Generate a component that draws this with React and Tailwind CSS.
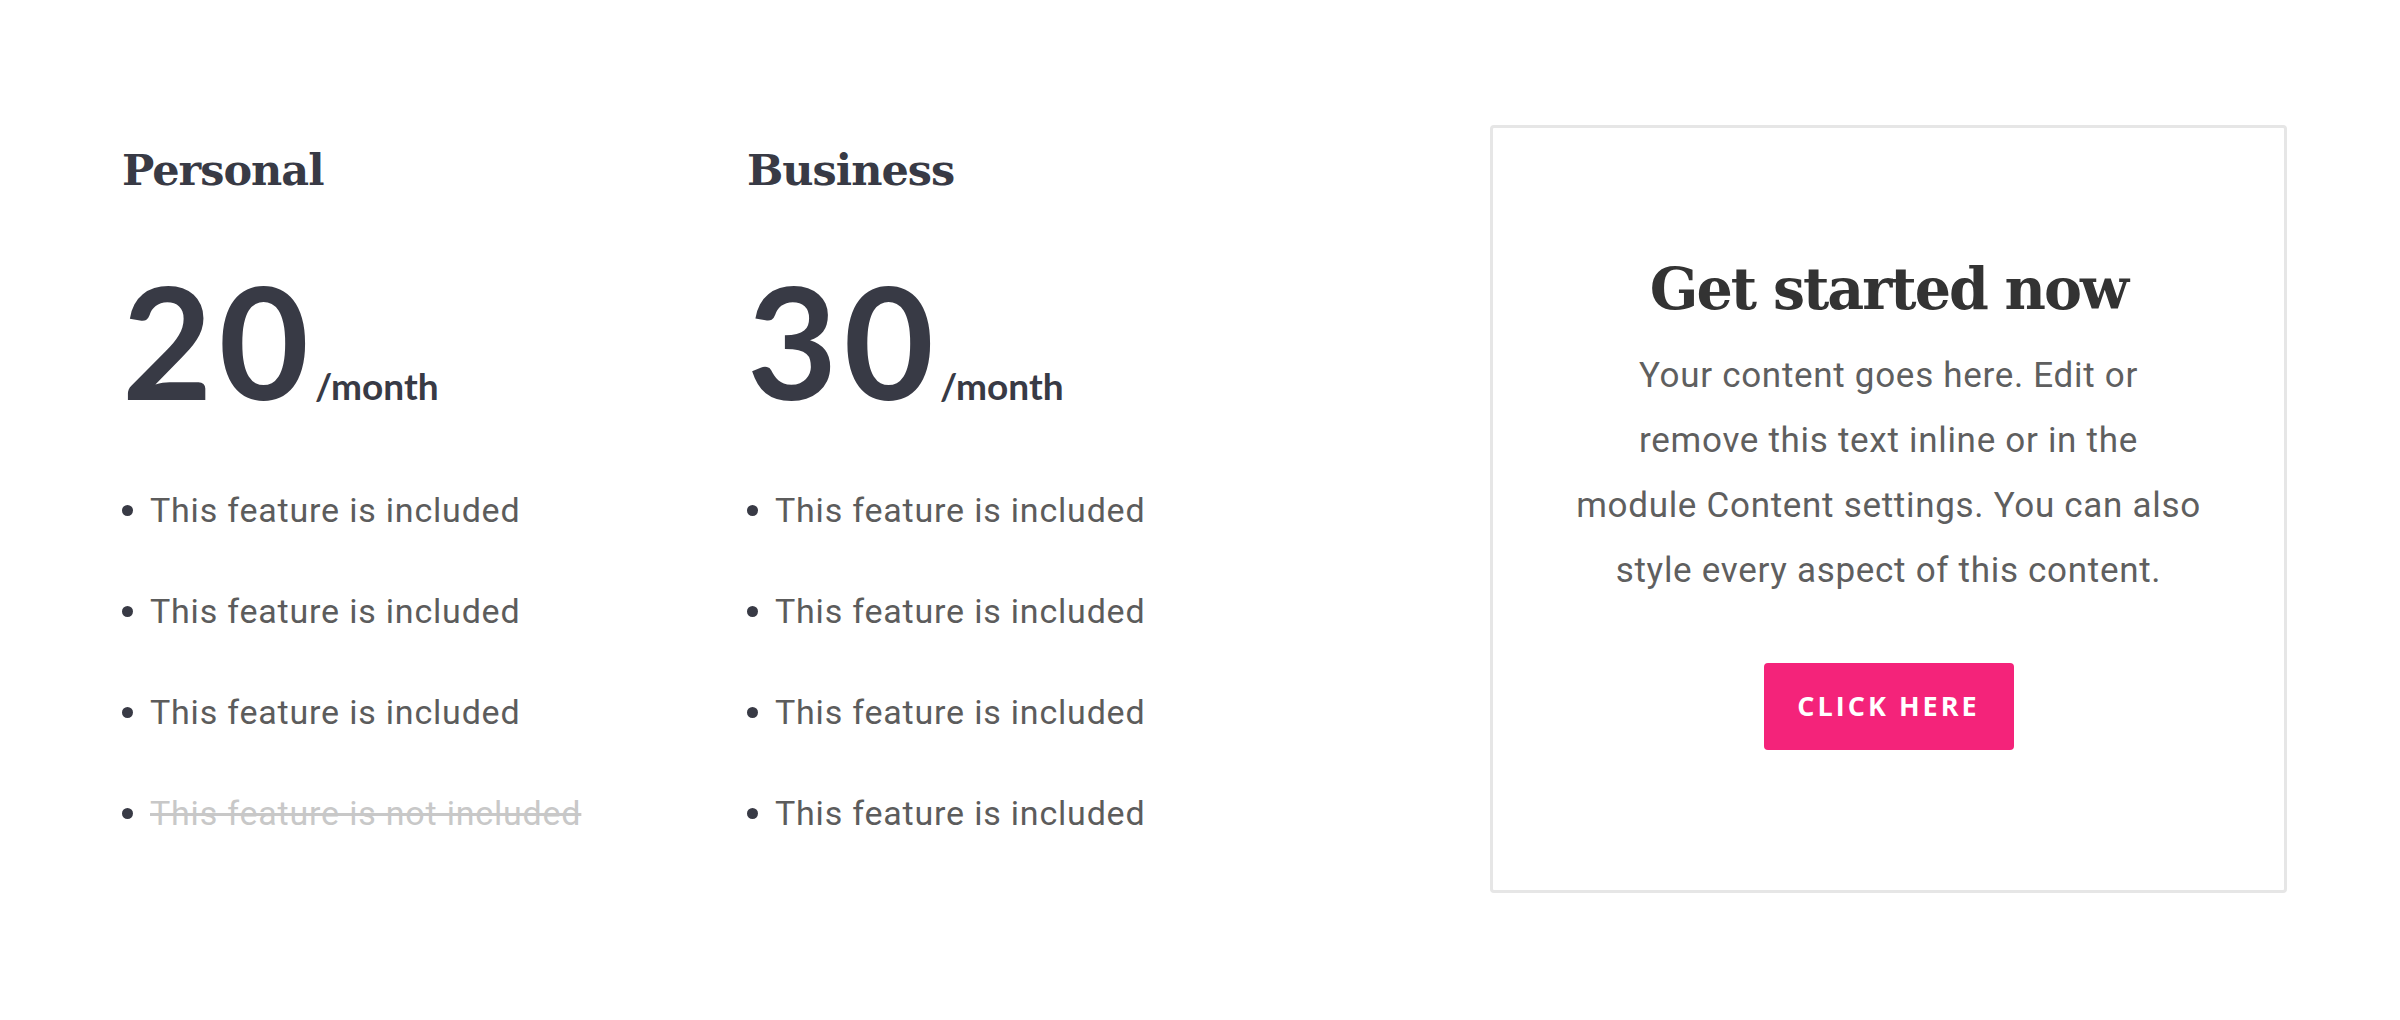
const plans = [
  {
    name: 'Personal',
    price: '20',
    features: [
      { text: 'This feature is included', on: true },
      { text: 'This feature is included', on: true },
      { text: 'This feature is included', on: true },
      { text: 'This feature is not included', on: false },
    ],
  },
  {
    name: 'Business',
    price: '30',
    features: [
      { text: 'This feature is included', on: true },
      { text: 'This feature is included', on: true },
      { text: 'This feature is included', on: true },
      { text: 'This feature is included', on: true },
    ],
  },
]

const slab = "font-['DejaVu_Serif',serif]"
const sans = "font-['Roboto','Liberation_Sans',sans-serif]"
const num = "font-['Lato','Liberation_Sans',sans-serif]"

function PlanColumn({ plan }) {
  return (
    <div className="w-[625px] shrink-0 pt-[140px]">
      <h2 className={`${slab} text-[43px] leading-[60px] font-bold text-[#383a45] tracking-[-1px]`}>{plan.name}</h2>
      <div className={`${num} flex items-baseline mt-[80px] text-[#383a45]`}>
        <span className="text-[156px] leading-[120px] font-bold tracking-[6px]">{plan.price}</span>
        <span className="text-[37px] font-bold">/month</span>
      </div>
      <ul className={`${sans} mt-[46px]`}>
        {plan.features.map((f, i) => (
          <li key={i} className="flex items-center h-[101px]">
            <span className="w-[11px] h-[11px] rounded-full bg-[#383a45] mr-[17px] shrink-0"></span>
            <span className={f.on ? 'text-[34px] tracking-[0.8px] text-[#5c5c5c]' : 'text-[34px] tracking-[0.8px] text-[#c8c8c8] line-through'}>{f.text}</span>
          </li>
        ))}
      </ul>
    </div>
  )
}

export default function App() {
  return (
    <div className="w-[2400px] h-[1020px] bg-white flex pl-[122px]">
      {plans.map(p => <PlanColumn key={p.name} plan={p} />)}
      <div className="ml-[118px] mt-[125px] w-[797px] h-[768px] border-[3px] border-[#e6e6e6] rounded-[4px] flex flex-col items-center justify-center text-center pb-[20px]">
        <h2 className={`${slab} text-[57px] leading-[80px] font-bold text-[#333333] tracking-[-2px]`}>Get started now</h2>
        <p className={`${sans} text-[35px] leading-[65px] tracking-[0.7px] text-[#5f5f5f] mt-[14px]`}>
          Your content goes here. Edit or<br />
          remove this text inline or in the<br />
          module Content settings. You can also<br />
          style every aspect of this content.
        </p>
        <button className="mt-[60px] w-[250px] h-[87px] rounded-[4px] bg-[#f4237a] text-white font-['Open_Sans',sans-serif] font-bold text-[27px] tracking-[3px]">
          CLICK HERE
        </button>
      </div>
    </div>
  )
}
